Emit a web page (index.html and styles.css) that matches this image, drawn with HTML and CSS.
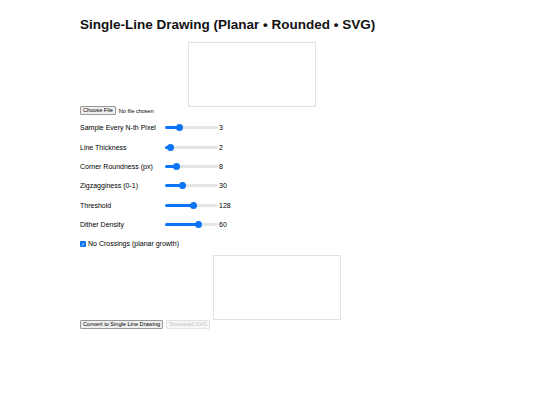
FILE: index.html
```html
<!DOCTYPE html>
<html>
  <head>
    <meta charset="utf-8" />
    <title>Single-Line Drawing</title>
    <link rel="stylesheet" href="styles.css">
  </head>
  <body>
    <div class="page">
      <h1>Single-Line Drawing (Planar &bull; Rounded &bull; SVG)</h1>
      <div class="preview"></div>
      <div class="upload">
        <span class="btn">Choose File</span>
        <span class="filename">No file chosen</span>
      </div>
      <ul class="controls">
        <li><label>Sample Every N-th Pixel</label><span class="range" style="--fill: 25%"><i style="left: 25%"></i></span><span class="val">3</span></li>
        <li><label>Line Thickness</label><span class="range" style="--fill: 8%"><i style="left: 8%"></i></span><span class="val">2</span></li>
        <li><label>Corner Roundness (px)</label><span class="range" style="--fill: 18%"><i style="left: 18%"></i></span><span class="val">8</span></li>
        <li><label>Zigzagginess (0-1)</label><span class="range" style="--fill: 30%"><i style="left: 30%"></i></span><span class="val">30</span></li>
        <li><label>Threshold</label><span class="range" style="--fill: 50%"><i style="left: 50%"></i></span><span class="val">128</span></li>
        <li><label>Dither Density</label><span class="range" style="--fill: 60%"><i style="left: 60%"></i></span><span class="val">60</span></li>
      </ul>
      <div class="check"><span class="box">&#10003;</span>No Crossings (planar growth)</div>
      <div class="output"></div>
      <div class="actions">
        <span class="btn">Convert to Single Line Drawing</span>
        <span class="btn disabled">Download SVG</span>
      </div>
    </div>
  </body>
</html>
```

FILE: styles.css
```css
body {
     margin: 0;
     font-family: "Liberation Sans", Arial, sans-serif;
     color: #000;
     background: #fff;
}
.page {
     padding: 15px 0 0 80px;
}
h1 {
     font-size: 13.5px;
     font-weight: bold;
     margin: 0;
     line-height: 20px;
     color: #111;
}
.preview {
     width: 126px;
     height: 63px;
     border: 1px solid #e2e2e2;
     margin: 7px 0 0 108px;
}
.output {
     width: 126px;
     height: 63px;
     border: 1px solid #e2e2e2;
     margin: 2px 0 0 133px;
}
.upload {
     font-size: 5.5px;
     display: flex;
     align-items: center;
     gap: 3px;
     height: 9px;
     margin-top: -1px;
}
.btn {
     display: inline-block;
     font-size: 5.6px;
     line-height: 7px;
     padding: 0 2px;
     border: 1px solid #999;
     border-radius: 1px;
     background: #efefef;
     color: #000;
}
.btn.disabled {
     border-color: #e3e3e3;
     background: #f7f7f7;
     color: #c0c0c0;
}
.controls {
     list-style-type: none;
     margin: 3px 0 0 0;
     padding: 0;
}
.controls li {
     display: flex;
     align-items: center;
     height: 19.4px;
     font-size: 7px;
}
.controls label {
     width: 85px;
}
.range {
     position: relative;
     width: 53px;
     height: 3px;
     border-radius: 2px;
     background: linear-gradient(to right, #0b75f5 var(--fill), #e4e4e4 var(--fill));
     margin-right: 1px;
}
.range i {
     position: absolute;
     top: -2px;
     width: 7px;
     height: 7px;
     margin-left: -2px;
     border-radius: 50%;
     background: #0b75f5;
}
.val {
     font-size: 7px;
}
.check {
     display: flex;
     align-items: center;
     font-size: 7px;
     height: 19px;
}
.check .box {
     display: inline-block;
     width: 6px;
     height: 6px;
     border-radius: 1px;
     background: #0b75f5;
     color: #fff;
     font-size: 5px;
     line-height: 6px;
     text-align: center;
     margin-right: 2px;
}
.actions {
     display: flex;
     gap: 3px;
     margin-top: 0;
}
```
